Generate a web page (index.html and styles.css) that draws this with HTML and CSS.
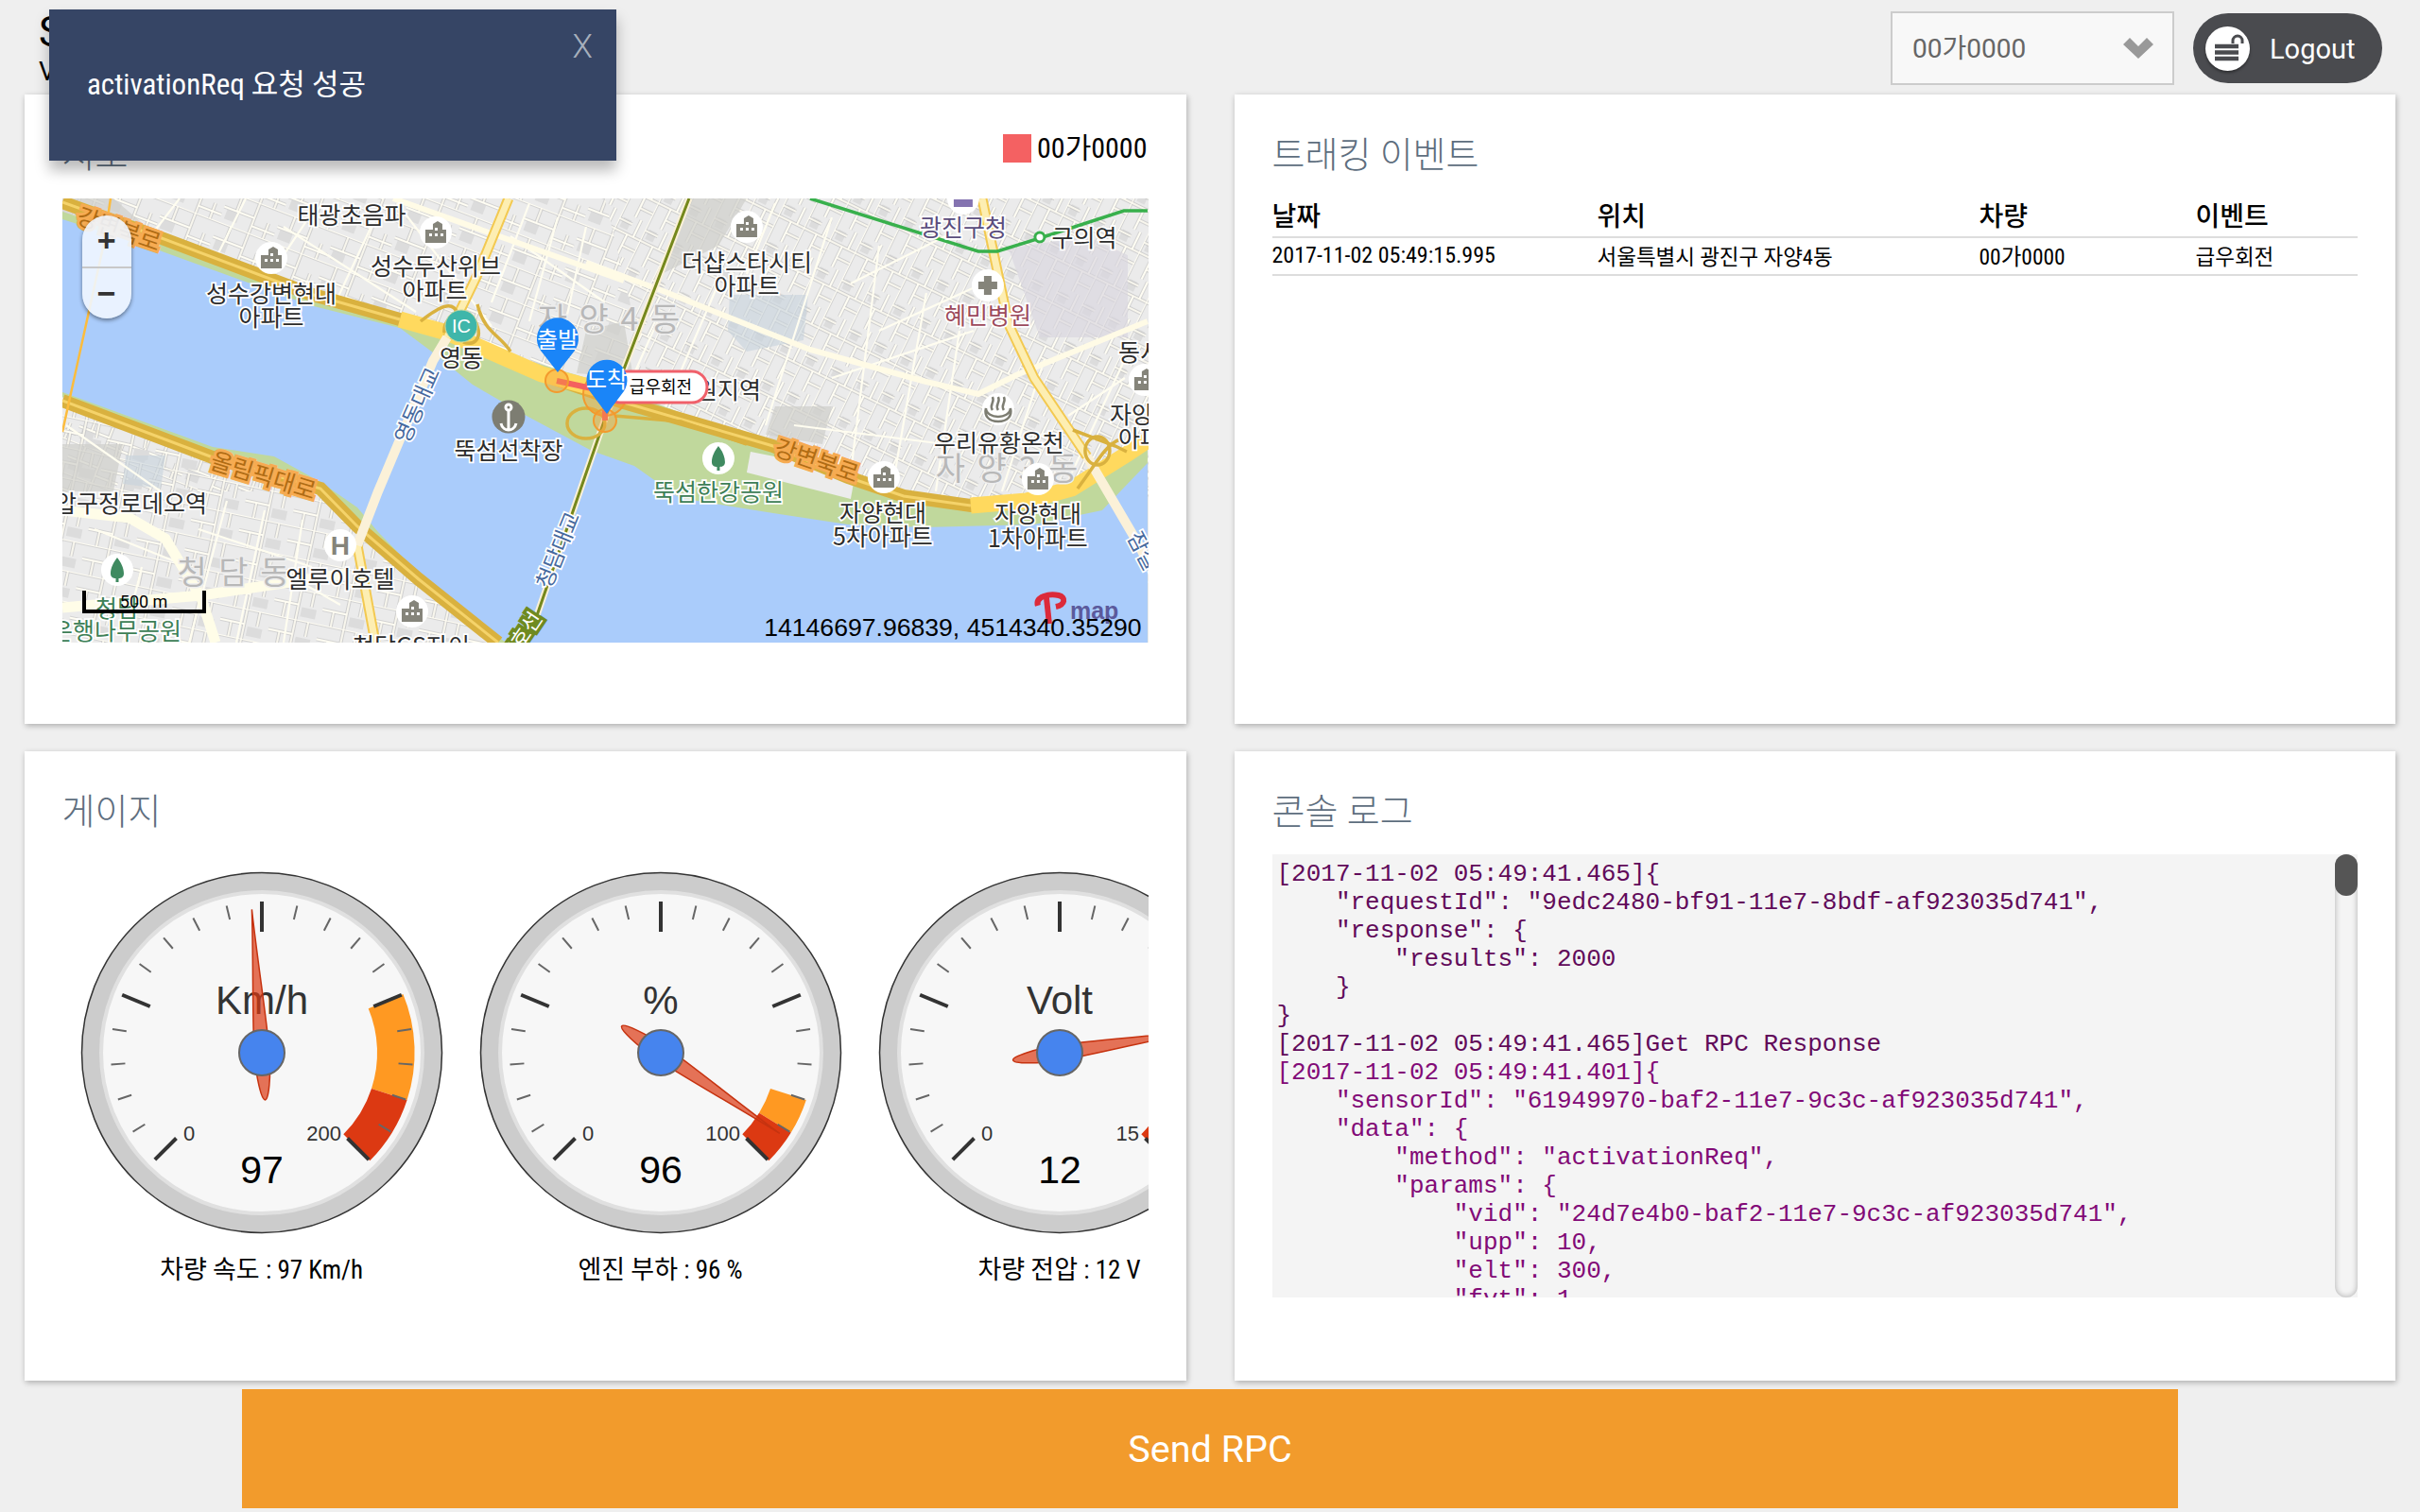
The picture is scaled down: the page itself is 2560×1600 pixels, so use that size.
FILE: index.html
```html
<!doctype html>
<html>
<head>
<meta charset="utf-8">
<title>Vehicle Monitor</title>
<link rel="stylesheet" href="styles.css">
</head>
<body>

<div class="toast">
	<span class="toast-msg">activationReq 요청 성공</span>
	<span class="toast-close">X</span>
</div>

<div class="header">
	<div class="brand">
		<div class="brand-title">S</div>
		<div class="brand-sub">V</div>
	</div>
	<div class="vehicle-select">
		<span>00가0000</span>
		<svg class="chevron" viewBox="0 0 32 22"><path d="M0 7 7 0 16 9 25 0 32 7 16 22Z"/></svg>
	</div>
	<a class="logout">
		<span class="logout-icon">
			<svg viewBox="0 0 47 47"><path d="M10 21H35M10 27.500H35M10 34H35" class="lock-bars"/><path d="M29 18V15A5 5 0 0 1 39 15V18" class="lock-arc"/></svg>
		</span>
		Logout
	</a>
</div>

<div class="cards">

	<div class="card">
		<div class="card-top">
			<h2 class="card-title">지도</h2>
			<div class="legend"><i class="legend-box"></i>00가0000</div>
		</div>
		<div class="map">
			<svg class="map-svg" viewBox="66 210 1149 470">
				<defs>
					<pattern id="streetsA" width="60" height="34" patternUnits="userSpaceOnUse" patternTransform="rotate(21)">
						<rect x="4" y="19" width="14" height="10" class="st-lot"/>
						<path d="M0 0H60M0 17H34M34 34V0M14 0V17M50 17V34M34 26H60" class="st-edge"/>
						<path d="M0 0H60M0 17H34M34 34V0M14 0V17M50 17V34M34 26H60" class="st-line"/>
					</pattern>
					<pattern id="streetsB" width="44" height="30" patternUnits="userSpaceOnUse" patternTransform="rotate(-64)">
						<rect x="28" y="4" width="11" height="9" class="st-lot"/>
						<path d="M0 0H44M0 15H24M24 30V0M11 15V30M36 0V15M24 22H44" class="st-edge"/>
						<path d="M0 0H44M0 15H24M24 30V0M11 15V30M36 0V15M24 22H44" class="st-line"/>
					</pattern>
					<pattern id="streetsC" width="52" height="32" patternUnits="userSpaceOnUse" patternTransform="rotate(12)">
						<rect x="30" y="18" width="16" height="10" class="st-lot"/>
						<path d="M0 0H52M0 16H26M26 32V0M12 16V32M40 0V16" class="st-edge"/>
						<path d="M0 0H52M0 16H26M26 32V0M12 16V32M40 0V16" class="st-line"/>
					</pattern>
					<symbol id="poi-building" viewBox="-18 -18 36 36" overflow="visible">
						<circle r="17" class="poi-bg"/>
						<path d="M-11 11V-3L-3 -3V-9L2 -12 7 -9V-3H11V11ZM-7 1V4H-4V1ZM-1 1V4H2V1ZM5 1V4H8V1ZM-1 -5V-2H2V-5Z" class="poi-mark" fill-rule="evenodd"/>
					</symbol>
					<symbol id="poi-tree" viewBox="-18 -18 36 36" overflow="visible">
						<circle r="17" class="poi-bg"/>
						<path d="M0 -13C4 -8 7 -2 7 4 7 8 4 9 1.500 9V13H-1.500V9C-4 9 -7 8 -7 4 -7 -2 -4 -8 0 -13Z" class="poi-tree"/>
					</symbol>
				</defs>

				<rect x="66" y="210" width="1149" height="470" class="m-land"/>
				<path d="M66 210H640L700 460 620 520H66Z" fill="url(#streetsA)"/>
				<path d="M640 210H1215V540H620L700 460Z" fill="url(#streetsB)"/>
				<path d="M66 400H420L560 680H66Z" fill="url(#streetsC)"/>
				<path d="M1067 263 1150 250 1193 270V357H1100Z" class="m-block-p"/>
				<path d="M725 210H790L760 260 700 290Z" class="m-block-g"/>
				<path d="M772 312H855L850 360 790 372 770 350Z" class="m-block-b"/>
				<path d="M133 482H175L170 517 130 512Z" class="m-block-b"/>
				<path d="M620 350 660 340 670 400 610 395Z" class="m-block-g"/>
				<path d="M66 210H120L155 240 66 226Z" class="m-block-g"/>
				<path d="M130 470H60V520H120ZM820 430H880L870 470 810 460Z" class="m-block-g"/>

				<g class="m-street">
					<path d="M190 210 150 262M260 210 220 290M330 225 280 300M395 235 355 320M420 215 520 345M300 240 440 330M540 250 640 320M560 215 520 320M590 230 560 340M620 240 590 380"/>
					<path d="M700 330 660 420M760 300 700 440M820 215 790 290M880 230 810 450M930 260 900 500M980 310 945 510M1015 350 990 520M930 350 1040 300M880 400 1030 350M840 450 1000 470M900 300 1000 250M1105 380 1060 520M1130 440 1190 400M1190 380 1120 530"/>
					<path d="M70 450 170 520M100 560 200 600M240 530 200 680M280 540 250 680M320 550 300 680M360 640 290 600M210 560 330 600M150 600 130 680"/>
				</g>

				<!-- 강 -->
				<path d="M66 224 163 256 328 316 423 340 473 356 634 404 818 474 897 508 1027 540 1134 522 1214 470V680H527L443 614 378 556 339 520 225 484 66 420Z" class="m-green"/>
				<path d="M794 478 905 500 900 528 790 500Z" class="m-lot"/>
				<path d="M66 232 163 263 328 323 423 347 458 373 500 407 557 440 626 477 671 493 719 527 818 543 897 555 976 558 1094 555 1166 540 1214 490V680H535L443 607 400 563 378 537 339 510 290 483 225 473 66 415Z" class="m-water"/>

				<!-- 도로 -->
				<path d="M66 214 163 249 328 311 423 338 473 352 573 396 660 426 818 472 897 505 956 525 1027 535 1086 530 1134 517 1193 480 1214 466" class="r-gold"/>
				<path d="M423 338 473 352 573 396 634 412" class="r-yellow"/>
				<path d="M1027 535 1086 530 1134 517 1193 480 1214 466" class="r-yellow"/>
				<path d="M66 214 163 249 328 311 423 338M660 426 818 472 897 505 956 525 1027 535" class="r-gold-line"/>
				<path d="M66 424 225 484 339 517 378 557 443 613 527 680" class="r-gold"/>
				<path d="M66 424 225 484 339 517 378 557 443 613 527 680" class="r-gold-line"/>
				<path d="M66 540 137 548 175 570 213 633 228 680M66 643 213 630 366 607" class="r-cream-w"/>
				<path d="M416 210 660 297M620 278 699 307 857 370 976 403 1035 417 1075 397 1214 340" class="r-cream"/>
				<path d="M117 210 110 257 66 457" class="r-orange"/>
				<path d="M538 210 504 293 473 357M1039 210 1067 343 1094 400 1150 483M378 577 397 680" class="r-pale-edge"/>
				<path d="M538 210 504 293 473 357M1039 210 1067 343 1094 400 1150 483M378 577 397 680" class="r-pale"/>
				<path d="M473 357 458 382 400 520 378 577" class="r-bridge"/>
				<path d="M1150 483 1205 577 1214 595" class="r-bridge"/>
				<path d="M729 210 640 443 565 660 540 680" class="r-metro-edge"/>
				<path d="M729 210 640 443 565 660 540 680" class="r-metro"/>
				<path d="M857 210 1035 266H1055L1100 252 1189 223H1214" class="r-subway"/>
				<circle cx="1100" cy="251" r="5" class="r-station"/>
				<g class="r-ramp">
					<path d="M445 340C470 320 480 320 484 332M470 352C468 330 500 326 505 345 510 360 500 366 490 362"/>
					<path d="M505 322C512 352 530 355 540 372"/>
					<ellipse cx="620" cy="448" rx="20" ry="16"/>
					<ellipse cx="1161" cy="477" rx="13" ry="15"/>
					<path d="M1135 455 1180 472 1192 478M1140 517C1160 490 1170 470 1185 465M650 440 720 446 790 470"/>
				</g>

				<!-- 큰 지역명 -->
				<g class="t-dong">
					<text x="247" y="618">청 담 동</text>
					<text x="644" y="350">자 양 4 동</text>
					<text x="1065" y="508">자 양 3 동</text>
				</g>

				<!-- 시설 아이콘 -->
				<use href="#poi-building" x="269" y="255" width="36" height="36"/>
				<use href="#poi-building" x="443" y="228" width="36" height="36"/>
				<use href="#poi-building" x="418" y="629" width="36" height="36"/>
				<use href="#poi-building" x="772" y="222" width="36" height="36"/>
				<use href="#poi-building" x="917" y="487" width="36" height="36"/>
				<use href="#poi-building" x="1080" y="489" width="36" height="36"/>
				<use href="#poi-building" x="1193" y="384" width="36" height="36"/>
				<use href="#poi-tree" x="106" y="585" width="36" height="36"/>
				<use href="#poi-tree" x="742" y="467" width="36" height="36"/>
				<circle cx="1019" cy="210" r="17" class="poi-bg"/>
				<path d="M1009 211V219H1029V211Z" class="poi-station"/>
				<circle cx="488" cy="345" r="17" class="poi-ic"/>
				<text x="488" y="352" class="poi-ic-t">IC</text>
				<circle cx="538" cy="441" r="17.500" class="poi-anchor"/>
				<path d="M538 434V455M530 448C531 453 535 455 538 455 541 455 545 453 546 448" class="poi-anchor-l"/>
				<circle cx="538" cy="431" r="3" class="poi-anchor-l"/>
				<circle cx="360" cy="577" r="17" class="poi-bg"/>
				<text x="360" y="587" class="poi-h">H</text>
				<circle cx="1045" cy="302" r="17" class="poi-bg"/>
				<path d="M1041 292H1049V298H1055V306H1049V312H1041V306H1035V298H1041Z" class="poi-mark"/>
				<circle cx="1056" cy="433" r="17" class="poi-bg"/>
				<path d="M1043 432C1044 444 1068 444 1069 432 1071 440 1066 446 1056 446 1046 446 1041 440 1043 432ZM1050 434C1046 428 1053 426 1050 420M1056 434C1052 428 1059 426 1056 420M1062 434C1058 428 1065 426 1062 420" class="poi-spa"/>

				<!-- 이름 -->
				<g class="t-name">
					<text x="372" y="237">태광초음파</text>
					<text x="461" y="291">성수두산위브</text>
					<text x="460" y="317">아파트</text>
					<text x="287" y="320">성수강변현대</text>
					<text x="287" y="345">아파트</text>
					<text x="488" y="388">영동</text>
					<text x="538" y="486">뚝섬선착장</text>
					<text x="219" y="542" class="t-end">압구정로데오역</text>
					<text x="360" y="622">엘루이호텔</text>
					<text x="435" y="693">청담GS자이</text>
					<text x="1147" y="261">구의역</text>
					<text x="790" y="287">더샵스타시티</text>
					<text x="790" y="312">아파트</text>
					<text x="805" y="422" class="t-end">뚝섬유원지역</text>
					<text x="1183" y="382" class="t-start">동서울</text>
					<text x="1174" y="448" class="t-start">자양</text>
					<text x="1183" y="473" class="t-start">아파트</text>
					<text x="1057" y="478">우리유황온천</text>
					<text x="934" y="552">자양현대</text>
					<text x="934" y="577">5차아파트</text>
					<text x="1098" y="553">자양현대</text>
					<text x="1098" y="579">1차아파트</text>
				</g>
				<g class="t-name t-park">
					<text x="124" y="653">청담</text>
					<text x="192" y="677" class="t-end">은행나무공원</text>
					<text x="760" y="530">뚝섬한강공원</text>
				</g>
				<text x="1019" y="250" class="t-name t-gov">광진구청</text>
				<text x="1045" y="343" class="t-name t-hosp">혜민병원</text>
				<g class="t-road">
					<text transform="translate(123 251) rotate(19)">강변북로</text>
					<text transform="translate(276 512) rotate(17)">올림픽대로</text>
					<text transform="translate(861 496) rotate(19)">강변북로</text>
				</g>
				<g class="t-bridge">
					<text transform="translate(449 432) rotate(-66)">영동대교</text>
					<text transform="translate(598 585) rotate(-68)">청담대교</text>
					<text transform="translate(1192 568) rotate(62)" class="t-start">잠실대교</text>
				</g>
				<text transform="translate(560 676) rotate(-56)" class="t-line">7호선</text>

				<!-- 경로 -->
				<circle cx="640" cy="417" r="23" class="track-dot"/>
				<path d="M589 403 640 414 640 445" class="track"/>
				<circle cx="589" cy="403" r="12" class="track-dot"/>
				<circle cx="640" cy="445" r="12" class="track-dot"/>
				<rect x="640" y="393" width="108" height="33" rx="16" class="event-pill"/>
				<text x="699" y="416" class="event-text">급우회전</text>
				<path d="M590 394 572 371A22 22 0 1 1 608 371Z" class="pin"/>
				<text x="590" y="368" class="pin-text">출발</text>
				<path d="M642 438 624 414A21.500 21.500 0 1 1 660 414Z" class="pin"/>
				<text x="642" y="410" class="pin-text">도착</text>

				<!-- 로고 -->
				<path d="M1098 641C1095 631 1110 628 1120 630 1128 632 1127 640 1117 642" class="logo-t"/>
				<path d="M1107 632 1110 660" class="logo-t"/>
				<text x="1132" y="655" class="logo-map">map</text>
			</svg>
			<div class="zoom-ctl">
				<div class="zoom-btn">+</div>
				<div class="zoom-btn">−</div>
			</div>
			<div class="scale-bar">500 m</div>
			<div class="coords">14146697.96839, 4514340.35290</div>
		</div>
	</div>

	<div class="card">
		<h2 class="card-title">트래킹 이벤트</h2>
		<table class="events">
			<thead>
				<tr><th>날짜</th><th>위치</th><th>차량</th><th>이벤트</th></tr>
			</thead>
			<tbody>
				<tr><td>2017-11-02 05:49:15.995</td><td>서울특별시 광진구 자양4동</td><td>00가0000</td><td>급우회전</td></tr>
			</tbody>
		</table>
	</div>

	<div class="card">
		<h2 class="card-title">게이지</h2>
		<div class="gauges">
			<div class="gauge">
				<svg class="gauge-svg" viewBox="-211 -200 422 400">
					<defs>
						<g id="gauge-face">
							<circle r="190.500" class="g-rim"/>
							<circle r="170" class="g-plate"/>
						</g>
						<g id="gauge-ticks">
							<path d="M0 -128V-160" class="g-major" transform="rotate(-135)"/>
							<path d="M0 -145V-160" class="g-minor" transform="rotate(-121.500)"/>
							<path d="M0 -145V-160" class="g-minor" transform="rotate(-108)"/>
							<path d="M0 -145V-160" class="g-minor" transform="rotate(-94.500)"/>
							<path d="M0 -145V-160" class="g-minor" transform="rotate(-81)"/>
							<path d="M0 -128V-160" class="g-major" transform="rotate(-67.500)"/>
							<path d="M0 -145V-160" class="g-minor" transform="rotate(-54)"/>
							<path d="M0 -145V-160" class="g-minor" transform="rotate(-40.500)"/>
							<path d="M0 -145V-160" class="g-minor" transform="rotate(-27)"/>
							<path d="M0 -145V-160" class="g-minor" transform="rotate(-13.500)"/>
							<path d="M0 -128V-160" class="g-major"/>
							<path d="M0 -145V-160" class="g-minor" transform="rotate(13.500)"/>
							<path d="M0 -145V-160" class="g-minor" transform="rotate(27)"/>
							<path d="M0 -145V-160" class="g-minor" transform="rotate(40.500)"/>
							<path d="M0 -145V-160" class="g-minor" transform="rotate(54)"/>
							<path d="M0 -128V-160" class="g-major" transform="rotate(67.500)"/>
							<path d="M0 -145V-160" class="g-minor" transform="rotate(81)"/>
							<path d="M0 -145V-160" class="g-minor" transform="rotate(94.500)"/>
							<path d="M0 -145V-160" class="g-minor" transform="rotate(108)"/>
							<path d="M0 -145V-160" class="g-minor" transform="rotate(121.500)"/>
							<path d="M0 -128V-160" class="g-major" transform="rotate(135)"/>
						</g>
						<path id="gauge-needle" d="M0 -152C-2 -100 -8 -30 -8 0 -8 25 -4 50 0 50 4 50 8 25 8 0 8 -30 2 -100 0 -152Z" class="g-needle"/>
					</defs>
					<use href="#gauge-face"/>
					<path d="M149.400 -61.900A161.700 161.700 0 0 1 153.600 50 L116 38A122 122 0 0 0 112.700 -46.700Z" class="g-warn"/>
					<path d="M153.600 50A161.700 161.700 0 0 1 114.300 114.300L86.300 86.300A122 122 0 0 0 116 38Z" class="g-crit"/>
					<use href="#gauge-ticks"/>
					<text y="-41" class="g-title">Km/h</text>
					<text x="-83" y="93" class="g-min">0</text>
					<text x="84" y="93" class="g-max">200</text>
					<text y="138" class="g-value">97</text>
					<use href="#gauge-needle" transform="rotate(-4)"/>
					<circle r="24" class="g-hub"/>
				</svg>
				<div class="gauge-cap">차량 속도 : 97 Km/h</div>
			</div>
			<div class="gauge">
				<svg class="gauge-svg" viewBox="-211 -200 422 400">
					<use href="#gauge-face"/>
					<path d="M153.800 50A161.700 161.700 0 0 1 137.800 84.600L104 63.800A122 122 0 0 0 116 38Z" class="g-warn"/>
					<path d="M137.800 84.600A161.700 161.700 0 0 1 114.300 114.300L86.300 86.300A122 122 0 0 0 104 63.800Z" class="g-crit"/>
					<use href="#gauge-ticks"/>
					<text y="-41" class="g-title">%</text>
					<text x="-83" y="93" class="g-min">0</text>
					<text x="84" y="93" class="g-max">100</text>
					<text y="138" class="g-value">96</text>
					<use href="#gauge-needle" transform="rotate(124.200)"/>
					<circle r="24" class="g-hub"/>
				</svg>
				<div class="gauge-cap">엔진 부하 : 96 %</div>
			</div>
			<div class="gauge">
				<svg class="gauge-svg" viewBox="-211 -200 422 400">
					<use href="#gauge-face"/>
					<path d="M153.800 50A161.700 161.700 0 0 1 137.800 84.600L104 63.800A122 122 0 0 0 116 38Z" class="g-warn"/>
					<path d="M137.800 84.600A161.700 161.700 0 0 1 114.300 114.300L86.300 86.300A122 122 0 0 0 104 63.800Z" class="g-crit"/>
					<use href="#gauge-ticks"/>
					<text y="-41" class="g-title">Volt</text>
					<text x="-83" y="93" class="g-min">0</text>
					<text x="84" y="93" class="g-max">15</text>
					<text y="138" class="g-value">12</text>
					<use href="#gauge-needle" transform="rotate(81)"/>
					<circle r="24" class="g-hub"/>
				</svg>
				<div class="gauge-cap">차량 전압 : 12 V</div>
			</div>
		</div>
	</div>

	<div class="card">
		<h2 class="card-title">콘솔 로그</h2>
		<div class="console">
<pre class="console-text"><span class="log-a">[2017-11-02 05:49:41.465]{
    "requestId": "9edc2480-bf91-11e7-8bdf-af923035d741",
    "response": {
        "results": 2000
    }
}
[2017-11-02 05:49:41.465]Get RPC Response</span>
<span class="log-b">[2017-11-02 05:49:41.401]{
    "sensorId": "61949970-baf2-11e7-9c3c-af923035d741",
    "data": {
        "method": "activationReq",
        "params": {
            "vid": "24d7e4b0-baf2-11e7-9c3c-af923035d741",
            "upp": 10,
            "elt": 300,
            "fvt": 1,</span></pre>
			<div class="scroll-track"><div class="scroll-thumb"></div></div>
		</div>
	</div>

</div>

<a class="send-rpc">Send RPC</a>

</body>
</html>
```

FILE: styles.css
```css
*{margin:0; padding:0; box-sizing:border-box;}
html,body{height:100%;}
body{background:#efefef; font-family:Roboto,"Noto Sans CJK KR",sans-serif; color:#000; overflow:hidden;}

.header{height:100px; display:flex; align-items:flex-start; padding:12px 40px 0 41px;}
.brand{flex:1; line-height:1;}
.brand-title{font-size:44px; height:50px;}
.brand-sub{font-size:28px;}
.vehicle-select{width:300px; height:78px; border:2px solid #ccc; background:#f8f8f8; display:flex; align-items:center; justify-content:space-between; padding:0 20px 4px 21px; font-size:28px; color:#666;}
.chevron{width:32px; height:22px; fill:#999; margin-top:4px;}
.logout{width:200px; height:74px; margin:2px 0 0 20px; border-radius:37px; background:#4a4b4f; color:#fff; display:flex; align-items:center; gap:21px; padding:2px 0 0 13px; font-size:29px;}
.logout-icon{width:47px; height:47px; margin-top:-2px; border-radius:50%; background:#fff; box-shadow:0 2px 3px rgba(0,0,0,.4); display:block;}
.logout-icon svg{width:47px; height:47px; display:block;}
.lock-bars{stroke:#4a4b4f; stroke-width:4.500; fill:none;}
.lock-arc{stroke:#4a4b4f; stroke-width:3; fill:none;}

.toast{position:absolute; left:52px; top:10px; width:600px; height:160px; background:#364565; color:#fff; box-shadow:0 10px 14px rgba(0,0,0,.28); z-index:5;}
.toast-msg{position:absolute; left:40px; top:54px; font-family:"Roboto Condensed",Roboto,"Noto Sans CJK KR",sans-serif; font-stretch:87%; font-size:31px;}
.toast-close{position:absolute; right:25px; top:19px; font-size:35px; font-weight:300; color:#a6afbc;}

.cards{display:flex; flex-wrap:wrap; column-gap:51px; row-gap:29px; padding:0 25.600px;}
.card{flex:0 0 calc((100% - 51px)/2); height:666px; background:#fff; padding:40px; box-shadow:1px 2px 6px rgba(0,0,0,.28); overflow:hidden;}
.card-top{display:flex; justify-content:space-between; align-items:flex-start;}
.card-title{font-size:38px; font-weight:300; color:#5e6e7e; line-height:44px; height:70px; padding-top:2px;}
.legend{display:flex; align-items:center; gap:6px; margin-right:1px; font-family:"Roboto Condensed",Roboto,"Noto Sans CJK KR",sans-serif; font-stretch:87%; font-size:30px; line-height:34px;}
.legend-box{width:30px; height:30px; background:#f46162;}

.map{position:relative; height:470px; overflow:hidden; background:#ededed;}
.map-svg{display:block; width:100%; height:100%; font-family:"Noto Sans CJK KR",sans-serif;}
.zoom-ctl{position:absolute; left:21px; top:18px; width:52px; height:109px; border-radius:26px; background:rgba(240,246,255,.9); box-shadow:0 2px 4px rgba(0,0,0,.45); display:flex; flex-direction:column;}
.zoom-btn{flex:1; display:flex; align-items:center; justify-content:center; font:bold 34px "Liberation Sans",sans-serif; color:#333;}
.zoom-btn:first-child{border-bottom:2px solid #c8c8c8;}
.scale-bar{position:absolute; left:21px; top:415px; width:131px; height:24px; border:4px solid #000; border-top:0; text-align:center; font:18px/24px Roboto,sans-serif;}
.coords{position:absolute; right:7px; bottom:1px; font:26.600px/30px "Liberation Sans",sans-serif; color:#000;}

.m-land{fill:#ebebeb;}
.m-water{fill:#aaccfb;}
.m-green{fill:#c0d89c;}
.m-lot{fill:#ececec;}
.m-block-p{fill:#d8d6de; opacity:.65;}
.m-block-g{fill:#cfcecb; opacity:.7;}
.m-block-b{fill:#c6d2dc; opacity:.6;}
.st-edge{stroke:#bcbcbc; stroke-width:3.200; fill:none;}
.st-line{stroke:#fffdf3; stroke-width:1.800; fill:none;}
.st-lot{fill:#dcdcdc;}
.m-street{stroke:#fffdf0; stroke-width:2.200; fill:none;}
.r-gold{stroke:#d9b13f; stroke-width:14; fill:none;}
.r-gold-line{stroke:#f5d36a; stroke-width:3; fill:none;}
.r-yellow{stroke:#ffd95e; stroke-width:17; fill:none;}
.r-cream{stroke:#fffbe6; stroke-width:6; fill:none;}
.r-cream-w{stroke:#fffde8; stroke-width:11; fill:none;}
.r-orange{stroke:#fcbc3d; stroke-width:2.500; fill:none;}
.r-pale-edge{stroke:#f3c950; stroke-width:11; fill:none;}
.r-pale{stroke:#fdeeb2; stroke-width:7; fill:none;}
.r-bridge{stroke:#fbf1d8; stroke-width:10; fill:none;}
.r-metro-edge{stroke:#fbf1d8; stroke-width:7; fill:none;}
.r-metro{stroke:#75881c; stroke-width:3; fill:none;}
.r-subway{stroke:#38b04c; stroke-width:3.500; fill:none;}
.r-station{fill:#fff; stroke:#38b04c; stroke-width:3;}
.r-ramp{stroke:#d9b13f; stroke-width:3.500; fill:none;}

.t-dong{font-size:34px; fill:#b8b8b8; text-anchor:middle; word-spacing:5px; stroke:#eee; stroke-width:3px; paint-order:stroke;}
.t-name{font-size:25px; fill:#2c2c2c; text-anchor:middle; stroke:#fff; stroke-width:3.500px; paint-order:stroke;}
.t-name .t-end{text-anchor:end;}
.t-name .t-start{text-anchor:start;}
.t-park{fill:#3d8056;}
.t-gov{fill:#5a4d7c;}
.t-hosp{fill:#9c4a5c;}
.t-road{font-size:25px; fill:#b06c14; text-anchor:middle; stroke:#f6ab52; stroke-width:6px; paint-order:stroke;}
.t-bridge{font-size:23px; fill:#46699e; text-anchor:middle; stroke:#fff; stroke-width:3.500px; paint-order:stroke;}
.t-bridge .t-start{text-anchor:start;}
.t-line{font-size:22px; fill:#fff; text-anchor:middle; stroke:#6f8a20; stroke-width:7px; paint-order:stroke;}
.poi-bg{fill:#fff;}
.poi-mark{fill:#85847a;}
.poi-tree{fill:#3f8a60;}
.poi-station{fill:#8473b0;}
.poi-ic{fill:#3fb6aa; stroke:#c8d8a0; stroke-width:1;}
.poi-ic-t{font:20px "Liberation Sans",sans-serif; fill:#fff; text-anchor:middle;}
.poi-anchor{fill:#7d7d72;}
.poi-anchor-l{fill:none; stroke:#fff; stroke-width:3;}
.poi-h{font:bold 28px "Liberation Sans",sans-serif; fill:#85847a; text-anchor:middle;}
.poi-spa{fill:none; stroke:#7d7d72; stroke-width:2.500;}
.track{stroke:#f4605f; stroke-width:6; fill:none;}
.track-dot{fill:rgba(245,160,60,.4); stroke:#f39a2e; stroke-width:2;}
.event-pill{fill:#fff; stroke:#f0606a; stroke-width:3;}
.event-text{font-size:18px; fill:#000; text-anchor:middle;}
.pin{fill:#1a85f8;}
.pin-text{font-size:24px; fill:#fff; text-anchor:middle;}
.logo-t{fill:none; stroke:#dc2a3a; stroke-width:6;}
.logo-map{font:bold 25px "Liberation Sans",sans-serif; fill:#5b5a9c;}

.events{width:100%; border-collapse:collapse; table-layout:fixed; margin-top:-6px; font-family:"Roboto Condensed",Roboto,"Noto Sans CJK KR",sans-serif; font-stretch:87%;}
.events th,.events td{text-align:left; font-weight:400; border-bottom:2px solid #ddd;}
.events th{font-size:28px; height:47px; font-weight:500;}
.events td{font-size:23.500px; height:40px; padding-bottom:2px;}
.events td:nth-child(1){font-size:24px;}
.events td:nth-child(2),.events td:nth-child(4){font-size:22.500px;}
.events th:nth-child(1){width:344px;}
.events th:nth-child(2){width:404px;}
.events th:nth-child(3){width:229px;}

.gauges{display:flex; overflow:hidden; margin:9px 0 0;}
.gauge{flex:0 0 422px;}
.gauge-svg{display:block; width:422px; height:400px; font-family:"Liberation Sans",Arial,sans-serif;}
.gauge-cap{text-align:center; font-family:"Roboto Condensed",Roboto,"Noto Sans CJK KR",sans-serif; font-stretch:87%; font-size:27px; line-height:40px; margin-top:10px;}
.g-rim{fill:#ccc; stroke:#333; stroke-width:1.500;}
.g-plate{fill:#f7f7f7; stroke:#e0e0e0; stroke-width:4;}
.g-warn{fill:#f92;}
.g-crit{fill:#dc3912;}
.g-major{stroke:#333; stroke-width:4;}
.g-minor{stroke:#666; stroke-width:2;}
.g-title{font-size:42px; fill:#333; text-anchor:middle;}
.g-min{font-size:22px; fill:#333; text-anchor:start;}
.g-max{font-size:22px; fill:#333; text-anchor:end;}
.g-value{font-size:41px; fill:#000; text-anchor:middle;}
.g-needle{fill:#dc3912; fill-opacity:.7; stroke:#c63310; stroke-width:1.500;}
.g-hub{fill:#4684ee; stroke:#666; stroke-width:2;}

.console{display:flex; height:469px; background:#f4f4f4; overflow:hidden; margin-top:-1px;}
.console-text{flex:1; overflow:hidden; padding:6px 0 0 5px; font:26px/30px "Liberation Mono","Courier New",monospace;}
.log-a{color:#610a5a;}
.log-b{color:#820a77;}
.scroll-track{flex:0 0 24px; border-radius:12px; background:#f4f4f4; box-shadow:inset 0 0 6px rgba(0,0,0,.3);}
.scroll-thumb{height:44px; border-radius:12px; background:#555;}

.send-rpc{display:flex; align-items:center; justify-content:center; width:80%; height:126px; margin:9px auto 0; background:#f29b2c; color:#fff; font-size:39.500px;}
```
